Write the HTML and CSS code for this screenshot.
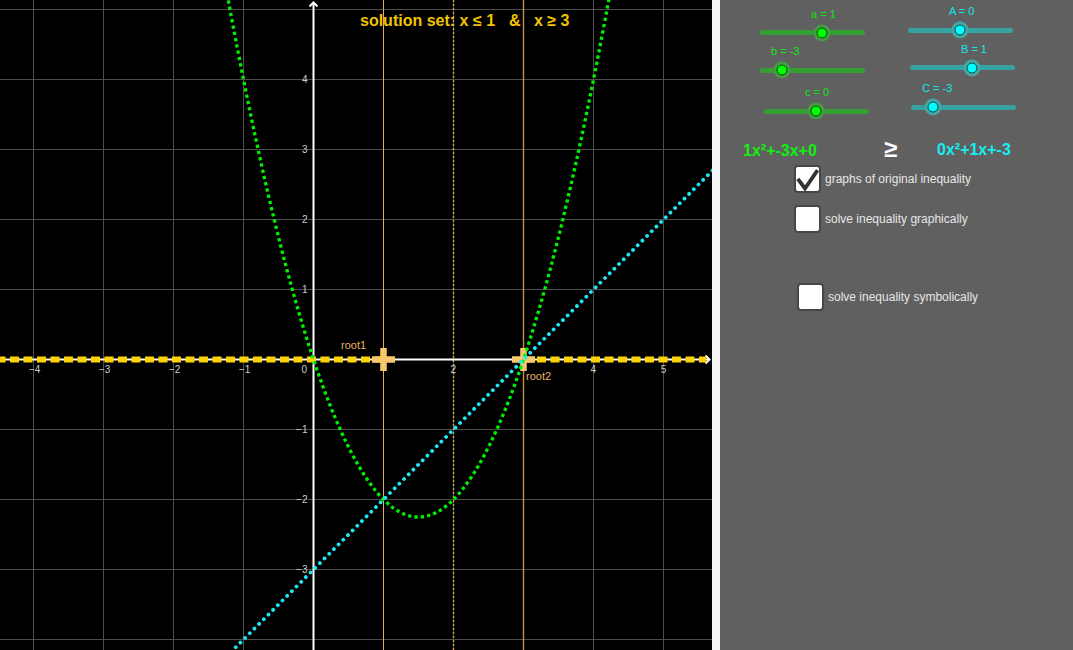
FILE: index.html
```html
<!DOCTYPE html>
<html lang="en">
<head>
<meta charset="utf-8">
<title>Quadratic inequality</title>
<link rel="stylesheet" href="styles.css">
</head>
<body>
<div class="app">
  <div class="graph">
    <svg class="plot" width="712" height="650" viewBox="0 0 712 650">
      <rect class="bg" x="0" y="0" width="712" height="650"/>
      <g class="grid">
        <line x1="33.5" y1="0" x2="33.5" y2="650"/>
        <line x1="103.5" y1="0" x2="103.5" y2="650"/>
        <line x1="173.5" y1="0" x2="173.5" y2="650"/>
        <line x1="243.5" y1="0" x2="243.5" y2="650"/>
        <line x1="383.5" y1="0" x2="383.5" y2="650"/>
        <line x1="453.5" y1="0" x2="453.5" y2="650"/>
        <line x1="523.5" y1="0" x2="523.5" y2="650"/>
        <line x1="593.5" y1="0" x2="593.5" y2="650"/>
        <line x1="663.5" y1="0" x2="663.5" y2="650"/>
        <line x1="0" y1="9.5" x2="712" y2="9.5"/>
        <line x1="0" y1="79.5" x2="712" y2="79.5"/>
        <line x1="0" y1="149.5" x2="712" y2="149.5"/>
        <line x1="0" y1="219.5" x2="712" y2="219.5"/>
        <line x1="0" y1="289.5" x2="712" y2="289.5"/>
        <line x1="0" y1="429.5" x2="712" y2="429.5"/>
        <line x1="0" y1="499.5" x2="712" y2="499.5"/>
        <line x1="0" y1="569.5" x2="712" y2="569.5"/>
        <line x1="0" y1="639.5" x2="712" y2="639.5"/>
      </g>
      <line class="vline" x1="383.5" y1="0" x2="383.5" y2="650"/>
      <line class="vline vline-dark" x1="523.5" y1="0" x2="523.5" y2="650"/>
      <line class="vline-dot" x1="453.5" y1="0" x2="453.5" y2="650"/>

      <g class="axis">
        <line x1="313.5" y1="2" x2="313.5" y2="650"/>
        <line x1="0" y1="359.5" x2="709" y2="359.5"/>
        <polyline points="309.5,6.5 313.5,2.5 317.5,6.5"/>
        <polyline points="705.5,355.5 709.5,359.5 705.5,363.5"/>
      </g>

      <g class="ticks">
        <text class="t-end" x="307.5" y="83.2">4</text>
        <text class="t-end" x="307.5" y="153.2">3</text>
        <text class="t-end" x="307.5" y="223.2">2</text>
        <text class="t-end" x="307.5" y="293.2">1</text>
        <text class="t-end" x="307.5" y="433.2">−1</text>
        <text class="t-end" x="307.5" y="503.2">−2</text>
        <text class="t-end" x="307.5" y="573.2">−3</text>
        <text class="t-mid" x="34.7" y="373.3">−4</text>
        <text class="t-mid" x="104.7" y="373.3">−3</text>
        <text class="t-mid" x="174.7" y="373.3">−2</text>
        <text class="t-mid" x="244.7" y="373.3">−1</text>
        <text class="t-end" x="307" y="373.3">0</text>
        <text class="t-mid" x="453.3" y="373.3">2</text>
        <text class="t-mid" x="593.3" y="373.3">4</text>
        <text class="t-mid" x="663.5" y="373.3">5</text>
      </g>

      <line class="solution" x1="0" y1="359.5" x2="383.5" y2="359.5" stroke-dashoffset="3.5"/>
      <line class="solution" x1="523.5" y1="359.5" x2="706" y2="359.5"/>

      <g class="root">
        <line x1="372" y1="359.5" x2="395" y2="359.5"/>
        <line x1="383.5" y1="348" x2="383.5" y2="371"/>
        <line x1="512" y1="359.5" x2="535" y2="359.5"/>
        <line x1="523.5" y1="348" x2="523.5" y2="371"/>
      </g>

      <path class="parabola" d="M226,-12.375 Q418.5,1046.375 611,-12.375"/>
      <line class="linear" x1="712.5" y1="170.5" x2="222.5" y2="660.5"/>

      <text class="root-label" x="341" y="348.5">root1</text>
      <text class="root-label" x="526" y="380">root2</text>

      <text class="title" x="360" y="26">solution set: x ≤ 1</text>
      <text class="title" x="509" y="26">&amp;</text>
      <text class="title" x="534" y="26">x ≥ 3</text>
    </svg>
  </div>
  <div class="divider"></div>
  <div class="panel">
    <div class="sliders">
      <div class="col col-left">
        <div class="slider green s-a" style="--f:0.6">
          <div class="s-label">a = 1</div>
          <div class="track"><span class="knob"></span></div>
        </div>
        <div class="slider green s-b" style="--f:0.2">
          <div class="s-label">b = -3</div>
          <div class="track"><span class="knob"></span></div>
        </div>
        <div class="slider green s-c" style="--f:0.5">
          <div class="s-label">c = 0</div>
          <div class="track"><span class="knob"></span></div>
        </div>
      </div>
      <div class="col col-right">
        <div class="slider cyan s-A" style="--f:0.5">
          <div class="s-label">A = 0</div>
          <div class="track"><span class="knob"></span></div>
        </div>
        <div class="slider cyan s-B" style="--f:0.6">
          <div class="s-label">B = 1</div>
          <div class="track"><span class="knob"></span></div>
        </div>
        <div class="slider cyan s-C" style="--f:0.2">
          <div class="s-label">C = -3</div>
          <div class="track"><span class="knob"></span></div>
        </div>
      </div>
    </div>

    <div class="equation">
      <span class="eq-left">1x²+-3x+0</span>
      <span class="eq-sign">≥</span>
      <span class="eq-right">0x²+1x+-3</span>
    </div>

    <div class="checks">
      <label class="check">
        <span class="box">
          <svg class="tick-mark" width="23" height="24" viewBox="0 0 23 24"><polyline points="1.8,11.8 9,21.5 21.6,3.2"/></svg>
        </span>
        <span class="check-text">graphs of original inequality</span>
      </label>
      <label class="check check-2">
        <span class="box"></span>
        <span class="check-text">solve inequality graphically</span>
      </label>
      <label class="check check-3">
        <span class="box"></span>
        <span class="check-text">solve inequality symbolically</span>
      </label>
    </div>
  </div>
</div>
</body>
</html>
```

FILE: styles.css
```css
html, body {
  margin: 0;
  padding: 0;
}

body {
  width: 1073px;
  height: 650px;
  overflow: hidden;
  font-family: "Liberation Sans", Arial, sans-serif;
  background: #606060;
}

.app {
  display: flex;
  width: 1073px;
  height: 650px;
}

.graph {
  width: 712px;
  height: 650px;
  flex: none;
  background: #000;
}

.plot {
  display: block;
}

.bg {
  fill: #000;
}

.grid line {
  stroke: #4e4e4e;
  stroke-width: 1;
}

.vline {
  stroke: #e2ad5c;
  stroke-width: 1;
}

.vline-dark {
  stroke: #c39247;
  stroke-width: 1.4;
}

.vline-dot {
  stroke: #d3a444;
  stroke-width: 1.4;
  stroke-dasharray: 2 2;
}

.axis line,
.axis polyline {
  stroke: #fff;
  stroke-width: 2;
  fill: none;
}

.ticks text {
  font-family: "Liberation Sans", Arial, sans-serif;
  font-size: 10px;
  fill: #cfcfcf;
}

.t-end {
  text-anchor: end;
}

.t-mid {
  text-anchor: middle;
}

.solution {
  stroke: #ffd200;
  stroke-width: 6;
  stroke-dasharray: 9 4.5;
}

.root line {
  stroke: #f8c86c;
  stroke-width: 6.5;
}

.parabola {
  fill: none;
  stroke: #00f000;
  stroke-width: 3.3;
  stroke-dasharray: 3.3 3.1;
}

.linear {
  stroke: #1de8f5;
  stroke-width: 3.8;
  stroke-linecap: round;
  stroke-dasharray: 0.01 6.6;
}

.root-label {
  font-family: "Liberation Sans", Arial, sans-serif;
  font-size: 11px;
  fill: #eab463;
}

.title {
  font-family: "Liberation Sans", Arial, sans-serif;
  font-size: 16px;
  font-weight: bold;
  fill: #f2c400;
}

.divider {
  width: 8px;
  flex: none;
  background: #f4f4f4;
}

.panel {
  flex: 1;
  display: flex;
  flex-direction: column;
  background: #606060;
}

/* sliders */
.sliders {
  display: flex;
  height: 138px;
  flex: none;
}

.col {
  display: flex;
  flex-direction: column;
}

.col-left {
  margin-left: 42px;
  padding-top: 7.5px;
}

.col-right {
  margin-left: 44px;
  padding-top: 5.3px;
}

.slider {
  width: 100px;
  height: 30px;
}

.s-b { margin-top: 7.5px; }
.s-c { margin-top: 11px; margin-left: 4px; }
.s-B { margin-top: 7.4px; margin-left: 2px; }
.s-C { margin-top: 9.6px; margin-left: 3px; }

.s-label {
  height: 13px;
  line-height: 13px;
  font-size: 11px;
  white-space: nowrap;
  padding-left: calc(var(--f) * 100px - 11px);
}

.track {
  position: relative;
  margin: 9.5px 0 0 -2.5px;
  width: 105px;
  height: 5px;
  border-radius: 2.5px;
}

.knob {
  position: absolute;
  left: calc(2.5px + var(--f) * 100px);
  top: 50%;
  width: 11px;
  height: 11px;
  box-sizing: border-box;
  border-radius: 50%;
  transform: translate(-50%, -50%);
}

.green .s-label { color: #12e412; }
.green .track { background: #34a034; }
.green .knob {
  background: #00ff00;
  border: 1px solid #0b4a0b;
  box-shadow: 0 0 0 3px #459c45;
}

.cyan .s-label { color: #14e6ea; }
.cyan .track { background: #37a2a2; }
.cyan .knob {
  background: #00ffff;
  border: 1px solid #0b4a4a;
  box-shadow: 0 0 0 3px #46a6a6;
}

/* equation */
.equation {
  display: flex;
  height: 24px;
  flex: none;
}

.eq-left {
  width: 141px;
  margin-left: 23px;
  margin-top: 4.2px;
  line-height: 18px;
  font-size: 16px;
  font-weight: bold;
  color: #10f010;
}

.eq-sign {
  width: 53px;
  margin-top: -1px;
  line-height: 24px;
  font-size: 24px;
  font-weight: bold;
  color: #fff;
}

.eq-right {
  margin-top: 2.7px;
  line-height: 18px;
  font-size: 16px;
  font-weight: bold;
  color: #16eef2;
}

/* checkboxes */
.checks {
  display: flex;
  flex-direction: column;
  margin-left: 74px;
  margin-top: 3px;
}

.check {
  display: flex;
  align-items: center;
  gap: 4px;
}

.check-2 {
  margin-top: 12px;
}

.check-3 {
  margin-top: 50px;
  margin-left: 3px;
}

.box {
  width: 27px;
  height: 28px;
  box-sizing: border-box;
  border: 2px solid #474747;
  border-radius: 4px;
  background: #fff;
  flex: none;
}

.tick-mark {
  display: block;
}

.tick-mark polyline {
  fill: none;
  stroke: #333;
  stroke-width: 3.8;
  stroke-linejoin: miter;
}

.check-text {
  font-size: 12px;
  color: #e6e6e6;
  white-space: nowrap;
}
```
